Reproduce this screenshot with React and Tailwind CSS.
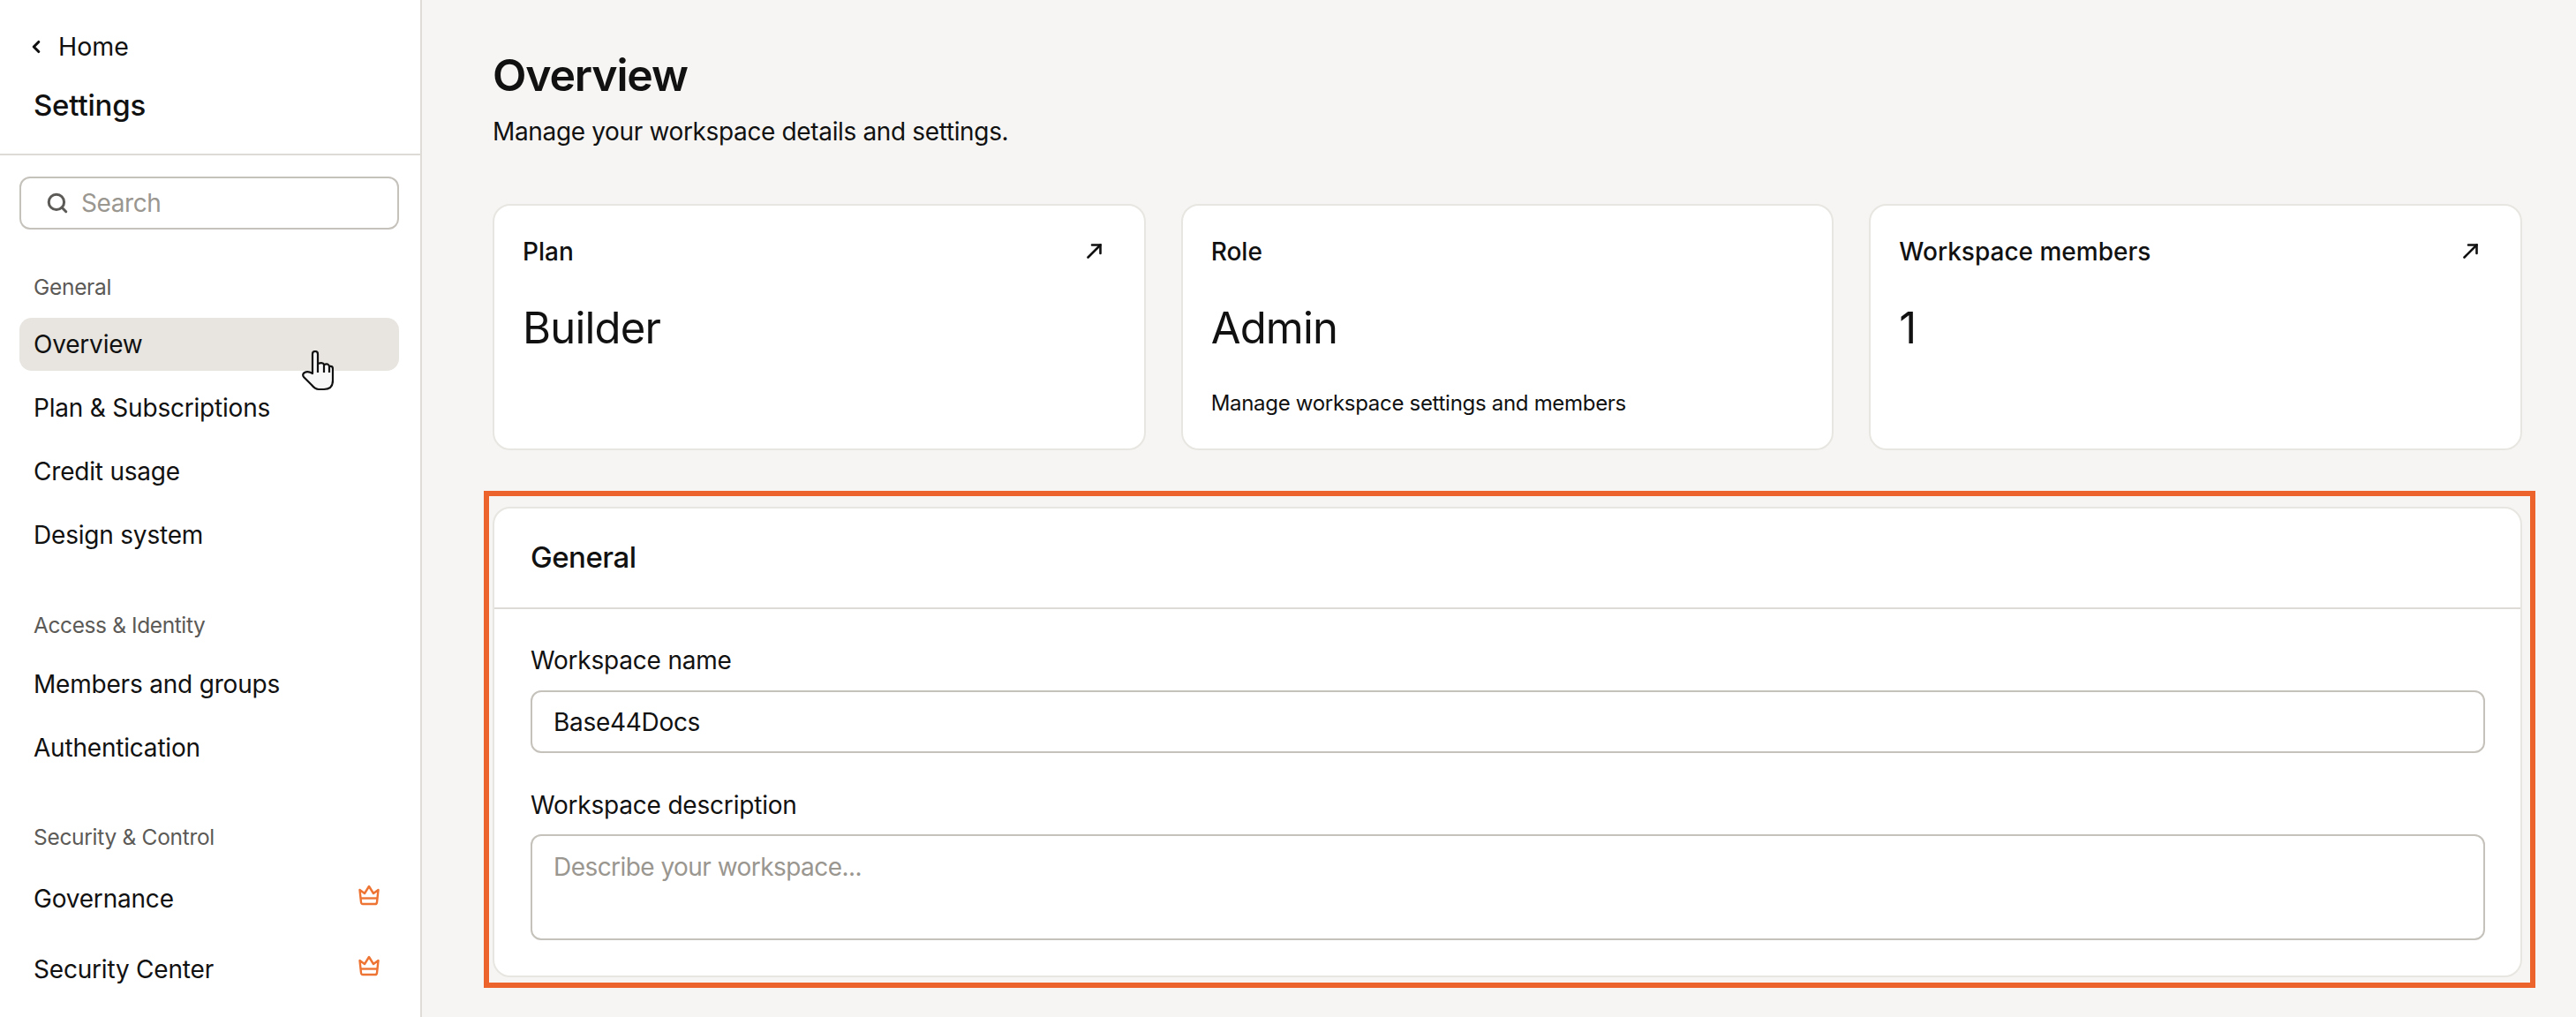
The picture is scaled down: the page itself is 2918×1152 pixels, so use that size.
import { ChevronLeft, Search } from "lucide-react";

const Crown = () => (
    <svg width="24" height="24" viewBox="0 0 24 24" fill="none" stroke="#ee7433" strokeWidth="2.4" strokeLinejoin="round">
        <path d="M1.5 6 L7 10 L12 2 L17 10 L22.5 6 L21 20 Q20.8 22 19 22 H5 Q3.2 22 3 20 Z" />
        <path d="M3 15.5 H21" />
    </svg>
);

const Arrow = () => (
    <svg width="18" height="18" viewBox="0 0 18 18" fill="none" stroke="#111" strokeWidth="2.6" strokeLinecap="round">
        <path d="M1.5 16.5 L15.5 2.5" />
        <path d="M6 2.5 H15.5 V12" />
    </svg>
);

const HandCursor = () => (
    <svg width="36" height="46" viewBox="0 0 36 46" fill="#f7f7f7" stroke="#111" strokeWidth="2.2" strokeLinejoin="round">
        <path d="M12 26 V4 Q12 1 15 1 Q18 1 18 4 V15 Q24 13 25 16 Q30 14 31 18 Q35 17 35 21 V34 Q35 44 25 44 H19 Q15 44 11 39 L2 30 Q0 27 3 25 Q7 23 12 26 Z" />
        <path d="M18 15 V25 M25 16 V25 M31 18 V25" fill="none" />
    </svg>
);

const NavItem = ({ label, active, crown }) => (
    <div className={`flex h-[60px] items-center justify-between rounded-[14px] pl-[16px] pr-[22px] text-[28px] tracking-[-0.2px] text-[#111] ${active ? "bg-[#e8e5e0]" : ""}`}>
        <span>{label}</span>
        {crown && <span className="-mt-[8px] flex"><Crown /></span>}
    </div>
);

const StatCard = ({ title, value, note, arrow }) => (
    <div className="flex h-[279px] flex-col rounded-[20px] border-2 border-[#e8e6e1] bg-white pl-[32px] pr-[47px] pt-[32px]">
        <div className="flex h-[40px] items-center justify-between text-[28px] font-medium text-[#111]">
            <span>{title}</span>
            {arrow && <span className="-mt-[2px] flex"><Arrow /></span>}
        </div>
        <div className="mt-[37px] h-[60px] text-[49px] leading-[60px] tracking-[-0.8px] text-[#111]">{value}</div>
        {note && <div className="mt-[38px] text-[24px] leading-[34px] tracking-[-0.3px] text-[#111]">{note}</div>}
    </div>
);

const App = () => {
    return (
        <div className="flex h-[1152px] w-[2918px] overflow-hidden bg-[#f6f5f3] font-['Inter',sans-serif]">
            <aside className="relative h-full w-[478px] shrink-0 border-r-2 border-[#dfdcd7] bg-white">
                <div className="h-[176px] border-b-2 border-[#dedbd6] pl-[32px] pt-[33px]">
                    <div className="flex h-[40px] items-center text-[28.5px] text-[#111]">
                        <ChevronLeft size={22} strokeWidth={3.4} className="-ml-[2px]" />
                        <span className="ml-[14px]">Home</span>
                    </div>
                    <div className="ml-[6px] mt-[24px] text-[33px] font-medium leading-[44px] tracking-[-0.2px] text-[#111]">Settings</div>
                </div>
                <div className="pl-[22px] pr-[24px]">
                    <div className="mt-[24px] flex h-[60px] items-center rounded-[12px] border-2 border-[#c5c1bb] pl-[28px]">
                        <Search size={26} strokeWidth={2.8} color="#5c5a57" />
                        <span className="ml-[14px] text-[28px] tracking-[-0.4px] text-[#9a9690]">Search</span>
                    </div>

                    <div className="mt-[47px] pl-[16px] text-[24.5px] leading-[36px] tracking-[-0.3px] text-[#5c5a57]">General</div>
                    <div className="mt-[17px] flex flex-col gap-[12px]">
                        <NavItem label="Overview" active />
                        <NavItem label="Plan & Subscriptions" />
                        <NavItem label="Credit usage" />
                        <NavItem label="Design system" />
                    </div>

                    <div className="mt-[54px] pl-[16px] text-[24.5px] leading-[36px] tracking-[-0.4px] text-[#5c5a57]">Access & Identity</div>
                    <div className="mt-[19px] flex flex-col gap-[12px]">
                        <NavItem label="Members and groups" />
                        <NavItem label="Authentication" />
                    </div>

                    <div className="mt-[53px] pl-[16px] text-[24.5px] leading-[36px] tracking-[-0.3px] text-[#5c5a57]">Security & Control</div>
                    <div className="mt-[22px] flex flex-col gap-[20px]">
                        <NavItem label="Governance" crown />
                        <NavItem label="Security Center" crown />
                    </div>
                </div>
                <div className="absolute left-[342px] top-[397px]"><HandCursor /></div>
            </aside>

            <main className="min-w-0 flex-1 pl-[80px] pr-[61px] pt-[55px]">
                <h1 className="text-[50px] font-semibold leading-[60px] tracking-[-1.2px] text-[#111]">Overview</h1>
                <p className="mt-[14px] text-[28px] leading-[40px] tracking-[-0.35px] text-[#111]">Manage your workspace details and settings.</p>

                <div className="mt-[62px] grid grid-cols-3 gap-[40px]">
                    <StatCard title="Plan" value="Builder" arrow />
                    <StatCard title="Role" value="Admin" note="Manage workspace settings and members" />
                    <StatCard title="Workspace members" value="1" arrow />
                </div>

                <section className="relative mt-[64px] rounded-[20px] border-2 border-[#e8e6e1] bg-white">
                    <div className="absolute -bottom-[14px] -left-[12px] -right-[17px] -top-[20px] border-[6px] border-[#ec642b]" />
                    <div className="flex h-[114px] items-center border-b-2 border-[#dedbd6] pl-[41px] text-[33px] font-medium tracking-[-0.5px] text-[#111]">General</div>
                    <div className="pb-[40px] pl-[41px] pr-[40px] pt-[40px]">
                        <label className="block text-[28px] leading-[36px] tracking-[-0.2px] text-[#111]">Workspace name</label>
                        <input
                            readOnly
                            value="Base44Docs"
                            className="mt-[16px] block h-[71px] w-full rounded-[12px] border-2 border-[#c5c1bb] bg-white px-[24px] text-[28px] tracking-[-0.3px] text-[#111] outline-none"
                        />
                        <label className="mt-[41px] block text-[28px] leading-[36px] tracking-[-0.2px] text-[#111]">Workspace description</label>
                        <textarea
                            readOnly
                            placeholder="Describe your workspace..."
                            className="mt-[15px] block h-[120px] w-full resize-none rounded-[12px] border-2 border-[#c5c1bb] bg-white px-[24px] py-[17px] text-[28px] leading-[36px] tracking-[-0.55px] text-[#111] outline-none placeholder:text-[#9a9690]"
                        />
                    </div>
                </section>
            </main>
        </div>
    );
};

export default App;
